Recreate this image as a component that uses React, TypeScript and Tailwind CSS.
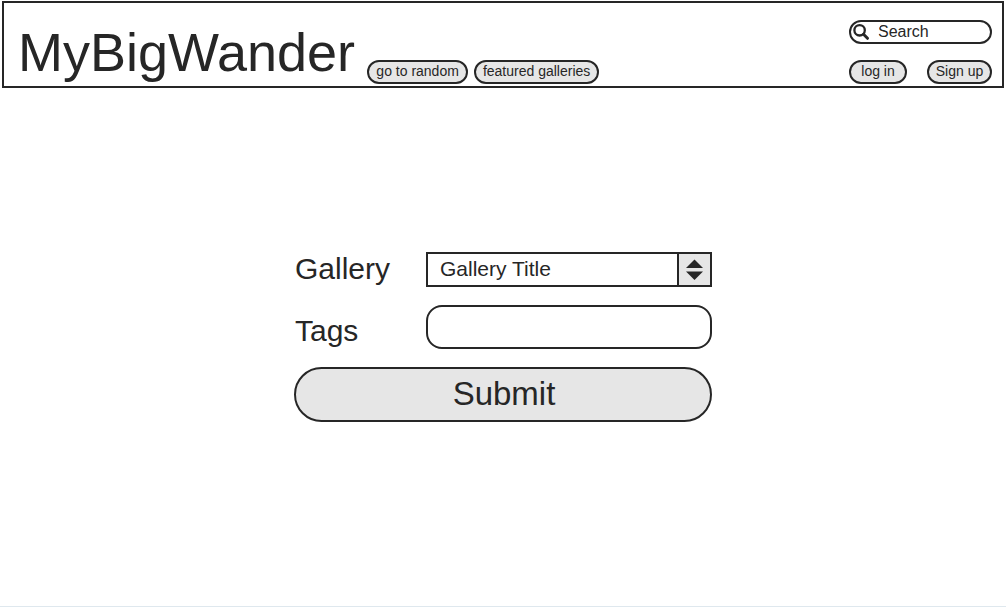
import type { ReactNode } from 'react';

function PillButton({ children, className = '' }: { children: ReactNode; className?: string }) {
  return (
    <button
      type="button"
      className={`h-6 whitespace-nowrap rounded-full border-2 border-[#262626] bg-[#e6e6e6] pb-0.5 text-center text-sm leading-[18px] ${className}`}
    >
      {children}
    </button>
  );
}

function SearchBox() {
  return (
    <label className="flex h-6 items-center rounded-full border-2 border-[#262626] bg-white">
      <svg viewBox="0 0 18 18" className="ml-px h-[18px] w-[18px] shrink-0" fill="none" stroke="#262626" aria-hidden="true">
        <circle cx="7.6" cy="7.3" r="5.2" strokeWidth="2.3" />
        <path d="M11.5 11.3l4 4" strokeWidth="3" strokeLinecap="round" />
      </svg>
      <input
        type="search"
        aria-label="Search"
        placeholder="Search"
        className="ml-2 w-full min-w-0 rounded-full bg-transparent pr-3 text-base leading-5 outline-none placeholder:text-[#262626]"
      />
    </label>
  );
}

function Header() {
  return (
    <header className="mx-0.5 mt-px flex items-stretch justify-between border-2 border-[#262626] pl-3.5 pr-2.5">
      <div className="flex items-end gap-3">
        <h1 className="pb-0.5 pt-[18px] text-[54px] leading-[63px]">MyBigWander</h1>
        <nav className="flex gap-1.5 pb-0.5">
          <PillButton className="w-[101px]">go to random</PillButton>
          <PillButton className="w-[125px]">featured galleries</PillButton>
        </nav>
      </div>
      <div className="flex w-[143px] flex-col justify-between pb-0.5 pt-[17px]">
        <SearchBox />
        <div className="flex justify-between">
          <PillButton className="w-[58px]">log in</PillButton>
          <PillButton className="w-[65px]">Sign up</PillButton>
        </div>
      </div>
    </header>
  );
}

function GalleryForm() {
  return (
    <form
      className="mx-auto grid w-full max-w-[418px] grid-cols-[132px_1fr] items-center gap-y-[18px]"
      onSubmit={(event) => event.preventDefault()}
    >
      <label htmlFor="gallery" className="pb-0.5 pl-px text-[30px] leading-[33px]">
        Gallery
      </label>
      <div className="relative">
        <select
          id="gallery"
          className="block h-[35px] w-full appearance-none border-2 border-[#262626] bg-white pb-0.5 pl-3 pr-10 text-[21px] leading-7 outline-none"
        >
          <option>Gallery Title</option>
        </select>
        <div className="pointer-events-none absolute inset-y-0 right-0 flex w-[35px] items-center justify-center border-2 border-[#262626] bg-[#e6e6e6]">
          <svg viewBox="0 0 18 22" className="h-[22px] w-[18px]" fill="#262626" aria-hidden="true">
            <path d="M8.5 0.5L17 9H0Z" />
            <path d="M8.5 21L17 12.5H0Z" />
          </svg>
        </div>
      </div>

      <label htmlFor="tags" className="pl-px pt-1.5 text-[30px] leading-[33px]">
        Tags
      </label>
      <input
        id="tags"
        type="text"
        className="h-11 w-full rounded-2xl border-2 border-[#262626] bg-white px-3 text-[21px] outline-none"
      />

      <button
        type="submit"
        className="col-span-2 h-[55px] rounded-full border-2 border-[#262626] bg-[#e6e6e6] pb-0.5 pl-0.5 text-[33px] leading-10"
      >
        Submit
      </button>
    </form>
  );
}

export default function App() {
  return (
    <div className="flex min-h-screen flex-col border-b border-[#dfe8ee] bg-white font-['Liberation_Sans',Arial,sans-serif] text-[#262626]">
      <Header />
      <main className="px-4 pt-41">
        <GalleryForm />
      </main>
    </div>
  );
}
